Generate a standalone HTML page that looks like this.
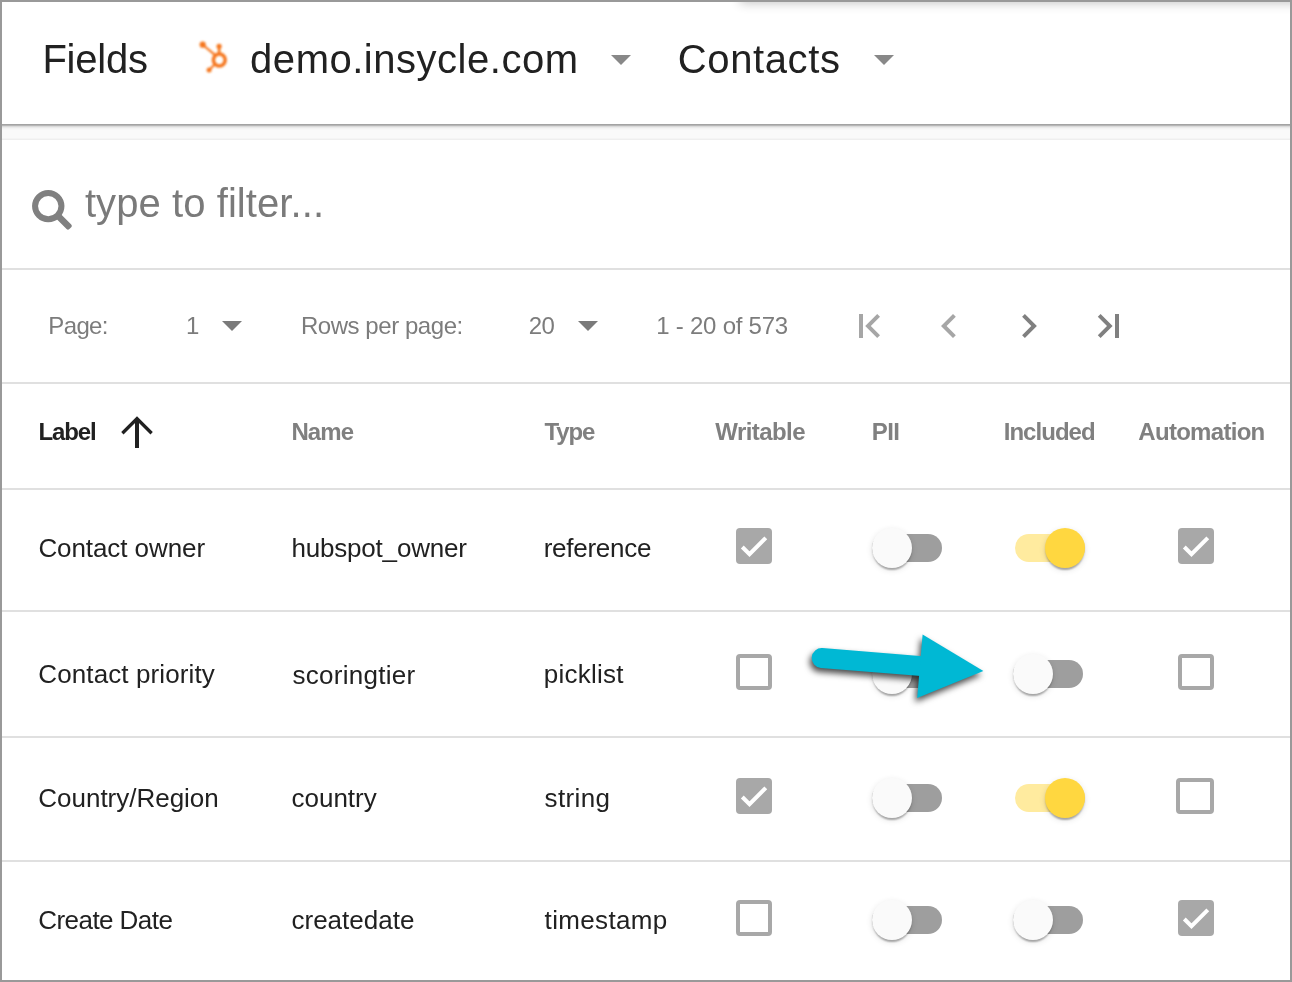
<!DOCTYPE html>
<html lang="en">
<head>
<meta charset="utf-8">
<title>Fields</title>
<style>
html,body{margin:0;padding:0}
body{width:1292px;height:982px;overflow:hidden;background:#fff;font-family:"Liberation Sans",sans-serif}
#app{position:relative;width:1292px;height:982px;overflow:hidden;background:#fff}
#txt{position:absolute;left:0;top:0;width:1292px;height:982px;will-change:transform}
#frame{position:absolute;left:0;top:0;width:1292px;height:982px;box-sizing:border-box;border:2px solid #999;z-index:50;pointer-events:none}
.t{position:absolute;white-space:nowrap;margin:0;padding:0}
.hl{position:absolute;left:2px;width:1288px;height:2px;background:#e0e0e0}
#topshadow{position:absolute;left:742px;top:-16px;width:700px;height:14px;box-shadow:0 3px 11px 2px rgba(0,0,0,.24)}
#tbshadow{position:absolute;left:2px;top:124px;width:1288px;height:16px;
 background:linear-gradient(to bottom,#a3a3a3 0,#a3a3a3 1px,#b6b6b6 1px,#b6b6b6 2px,#dadada 2px,#dadada 3px,#eaeaea 3px,#eaeaea 4px,#f3f3f3 4px,#f3f3f3 5px,#f7f7f7 5px,#f7f7f7 6px,#fafafa 6px,#fafafa 14px,#f5f5f5 14px,#f5f5f5 15px,#efefef 15px,#efefef 16px)}
.tri{position:absolute;width:0;height:0;border-left:10px solid transparent;border-right:10px solid transparent;border-top:10px solid #888}
.cb{position:absolute;width:36px;height:36px;box-sizing:border-box;border-radius:4px}
.cb.off{border:4px solid #a8a8a8;background:#fff}
.cb.on{background:#a8a8a8}
.cb svg{position:absolute;left:0;top:0}
.tr{position:absolute;width:70px;height:28px;border-radius:14px;background:#9e9e9e}
.tr.on{background:#ffeb9f}
.th{position:absolute;width:40px;height:40px;border-radius:50%;background:#fafafa;box-shadow:0 4px 2px -2px rgba(0,0,0,.2),0 2px 2px 0 rgba(0,0,0,.14),0 2px 6px 0 rgba(0,0,0,.12)}
.th.on{background:#ffd740}
svg.ov{position:absolute;left:0;top:0;overflow:visible}
</style>
</head>
<body>
<div id="app">
<div id="topshadow"></div>
<div id="tbshadow"></div>

<!-- separators -->
<div class="hl" style="top:268px"></div>
<div class="hl" style="top:382px"></div>
<div class="hl" style="top:488px"></div>
<div class="hl" style="top:610px"></div>
<div class="hl" style="top:736px"></div>
<div class="hl" style="top:860px"></div>

<!-- toolbar dropdown carets -->
<div class="tri" style="left:610.7px;top:55px"></div>
<div class="tri" style="left:874px;top:55px"></div>
<!-- paginator carets -->
<div class="tri" style="left:222px;top:320.6px;border-top-color:#7a7a7a"></div>
<div class="tri" style="left:577.5px;top:320.6px;border-top-color:#7a7a7a"></div>

<div id="txt">
<div class="t" style="left:42.40px;top:39px;font-size:40px;line-height:40px;font-weight:400;color:#212121;letter-spacing:-0.240px">Fields</div>
<div class="t" style="left:250.10px;top:39px;font-size:40px;line-height:40px;font-weight:400;color:#212121;letter-spacing:0.520px">demo.insycle.com</div>
<div class="t" style="left:677.80px;top:39px;font-size:40px;line-height:40px;font-weight:400;color:#212121;letter-spacing:0.607px">Contacts</div>
<div class="t" style="left:84.90px;top:183px;font-size:40px;line-height:40px;font-weight:400;color:#7a7a7a;letter-spacing:0.076px">type to filter...</div>
<div class="t" style="left:48.30px;top:314px;font-size:24px;line-height:24px;font-weight:400;color:#7c7c7c;letter-spacing:-0.638px">Page:</div>
<div class="t" style="left:186.00px;top:314px;font-size:24px;line-height:24px;font-weight:400;color:#7c7c7c;letter-spacing:0.000px">1</div>
<div class="t" style="left:300.90px;top:314px;font-size:24px;line-height:24px;font-weight:400;color:#7c7c7c;letter-spacing:-0.440px">Rows per page:</div>
<div class="t" style="left:528.70px;top:314px;font-size:24px;line-height:24px;font-weight:400;color:#7c7c7c;letter-spacing:-0.548px">20</div>
<div class="t" style="left:656.30px;top:314px;font-size:24px;line-height:24px;font-weight:400;color:#7c7c7c;letter-spacing:-0.243px">1 - 20 of 573</div>
<div class="t" style="left:38.40px;top:420px;font-size:24px;line-height:24px;font-weight:700;color:#212121;letter-spacing:-1.079px">Label</div>
<div class="t" style="left:291.40px;top:420px;font-size:24px;line-height:24px;font-weight:700;color:#808080;letter-spacing:-0.873px">Name</div>
<div class="t" style="left:544.50px;top:420px;font-size:24px;line-height:24px;font-weight:700;color:#808080;letter-spacing:-1.129px">Type</div>
<div class="t" style="left:715.30px;top:420px;font-size:24px;line-height:24px;font-weight:700;color:#808080;letter-spacing:-0.571px">Writable</div>
<div class="t" style="left:871.80px;top:420px;font-size:24px;line-height:24px;font-weight:700;color:#808080;letter-spacing:-0.588px">PII</div>
<div class="t" style="left:1003.70px;top:420px;font-size:24px;line-height:24px;font-weight:700;color:#808080;letter-spacing:-0.959px">Included</div>
<div class="t" style="left:1138.30px;top:420px;font-size:24px;line-height:24px;font-weight:700;color:#808080;letter-spacing:-0.706px">Automation</div>
<div class="t" style="left:38.40px;top:535px;font-size:26px;line-height:26px;font-weight:400;color:#212121;letter-spacing:-0.082px">Contact owner</div>
<div class="t" style="left:291.40px;top:535px;font-size:26px;line-height:26px;font-weight:400;color:#212121;letter-spacing:-0.187px">hubspot_owner</div>
<div class="t" style="left:543.70px;top:535px;font-size:26px;line-height:26px;font-weight:400;color:#212121;letter-spacing:-0.272px">reference</div>
<div class="t" style="left:38.30px;top:661px;font-size:26px;line-height:26px;font-weight:400;color:#212121;letter-spacing:0.111px">Contact priority</div>
<div class="t" style="left:292.50px;top:662px;font-size:26px;line-height:26px;font-weight:400;color:#212121;letter-spacing:0.263px">scoringtier</div>
<div class="t" style="left:543.70px;top:661px;font-size:26px;line-height:26px;font-weight:400;color:#212121;letter-spacing:0.259px">picklist</div>
<div class="t" style="left:38.30px;top:785px;font-size:26px;line-height:26px;font-weight:400;color:#212121;letter-spacing:-0.015px">Country/Region</div>
<div class="t" style="left:291.50px;top:785px;font-size:26px;line-height:26px;font-weight:400;color:#212121;letter-spacing:-0.010px">country</div>
<div class="t" style="left:544.60px;top:785px;font-size:26px;line-height:26px;font-weight:400;color:#212121;letter-spacing:0.376px">string</div>
<div class="t" style="left:38.30px;top:907px;font-size:26px;line-height:26px;font-weight:400;color:#212121;letter-spacing:-0.562px">Create Date</div>
<div class="t" style="left:291.50px;top:907px;font-size:26px;line-height:26px;font-weight:400;color:#212121;letter-spacing:-0.001px">createdate</div>
<div class="t" style="left:544.60px;top:907px;font-size:26px;line-height:26px;font-weight:400;color:#212121;letter-spacing:0.343px">timestamp</div>
</div>

<!-- icons -->
<svg class="ov" width="1292" height="982" viewBox="0 0 1292 982">
  <!-- hubspot sprocket -->
  <defs><filter id="soft" x="-20%" y="-20%" width="140%" height="140%"><feGaussianBlur stdDeviation="0.85"/></filter></defs>
  <g fill="#f5761f" stroke="#f5761f" filter="url(#soft)">
    <circle cx="219.3" cy="60" r="5.9" fill="none" stroke-width="3.5"/>
    <line x1="202.7" y1="44.7" x2="214.6" y2="54.6" stroke-width="2.1"/>
    <line x1="219.1" y1="46.3" x2="219.2" y2="54" stroke-width="2.6"/>
    <line x1="209.1" y1="69.9" x2="214.6" y2="64.6" stroke-width="2.1"/>
    <circle cx="202.7" cy="44.7" r="3.1" stroke="none"/>
    <circle cx="219.1" cy="46.3" r="2.6" stroke="none"/>
    <circle cx="209.1" cy="69.9" r="2.5" stroke="none"/>
  </g>
  <!-- search -->
  <g stroke="#808080" fill="none">
    <circle cx="48.25" cy="206.1" r="13.2" stroke-width="6"/>
    <rect x="60.25" y="202.8" width="19.2" height="6.6" rx="2" fill="#808080" stroke="none" transform="rotate(45 48.25 206.1)"/>
  </g>
  <!-- sort arrow -->
  <g fill="#212121">
    <rect x="135" y="419" width="4" height="29"/>
    <polygon points="137,416.2 121.2,432.1 123.5,434.4 137,420.9 150.5,434.4 152.8,432.1"/>
  </g>
  <!-- paginator nav -->
  <g fill="#a6a6a6">
    <rect x="859" y="314" width="4" height="24"/>
    <polygon points="865.2,326 877.2,314 880,316.8 870.8,326 880,335.2 877.2,338"/>
    <polygon points="941,326 953,314 955.8,316.8 946.6,326 955.8,335.2 953,338"/>
  </g>
  <g fill="#808080">
    <polygon points="1036.9,326 1024.9,314 1022.1,316.8 1031.3,326 1022.1,335.2 1024.9,338"/>
    <polygon points="1112.6,326 1100.6,314 1097.8,316.8 1107,326 1097.8,335.2 1100.6,338"/>
    <rect x="1115" y="314" width="4" height="24"/>
  </g>
</svg>

<!-- row 1 -->
<div class="cb on" style="left:736px;top:528px"><svg width="36" height="36" viewBox="0 0 36 36"><polyline points="6.3,19 13.5,26.2 29.8,9.9" fill="none" stroke="#fff" stroke-width="4"/></svg></div>
<div class="tr" style="left:872px;top:534px"></div><div class="th" style="left:872px;top:528px"></div>
<div class="tr on" style="left:1015px;top:534px"></div><div class="th on" style="left:1045px;top:528px"></div>
<div class="cb on" style="left:1178px;top:528px"><svg width="36" height="36" viewBox="0 0 36 36"><polyline points="6.3,19 13.5,26.2 29.8,9.9" fill="none" stroke="#fff" stroke-width="4"/></svg></div>

<!-- row 2 -->
<div class="cb off" style="left:736px;top:654px"></div>
<div class="tr" style="left:872px;top:660px"></div><div class="th" style="left:872px;top:654px"></div>
<div class="tr" style="left:1013px;top:660px"></div><div class="th" style="left:1013px;top:654px"></div>
<div class="cb off" style="left:1178px;top:654px"></div>

<!-- row 3 -->
<div class="cb on" style="left:736px;top:778px"><svg width="36" height="36" viewBox="0 0 36 36"><polyline points="6.3,19 13.5,26.2 29.8,9.9" fill="none" stroke="#fff" stroke-width="4"/></svg></div>
<div class="tr" style="left:872px;top:784px"></div><div class="th" style="left:872px;top:778px"></div>
<div class="tr on" style="left:1015px;top:784px"></div><div class="th on" style="left:1045px;top:778px"></div>
<div class="cb off" style="left:1176px;top:778px;width:38px"></div>

<!-- row 4 -->
<div class="cb off" style="left:736px;top:900px"></div>
<div class="tr" style="left:872px;top:906px"></div><div class="th" style="left:872px;top:900px"></div>
<div class="tr" style="left:1013px;top:906px"></div><div class="th" style="left:1013px;top:900px"></div>
<div class="cb on" style="left:1178px;top:900px"><svg width="36" height="36" viewBox="0 0 36 36"><polyline points="6.3,19 13.5,26.2 29.8,9.9" fill="none" stroke="#fff" stroke-width="4"/></svg></div>

<!-- annotation arrow -->
<svg class="ov" width="1292" height="982" viewBox="0 0 1292 982" style="filter:drop-shadow(-2px 4.5px 3px rgba(0,0,0,.7))">
  <g fill="#00b8d4" stroke="none">
    <line x1="821.7" y1="658" x2="925" y2="666.4" stroke="#00b8d4" stroke-width="20" stroke-linecap="round"/>
    <polygon points="922.6,634.6 983.4,671.1 917.2,698.1"/>
  </g>
</svg>

<div id="frame"></div>
</div>
</body>
</html>
